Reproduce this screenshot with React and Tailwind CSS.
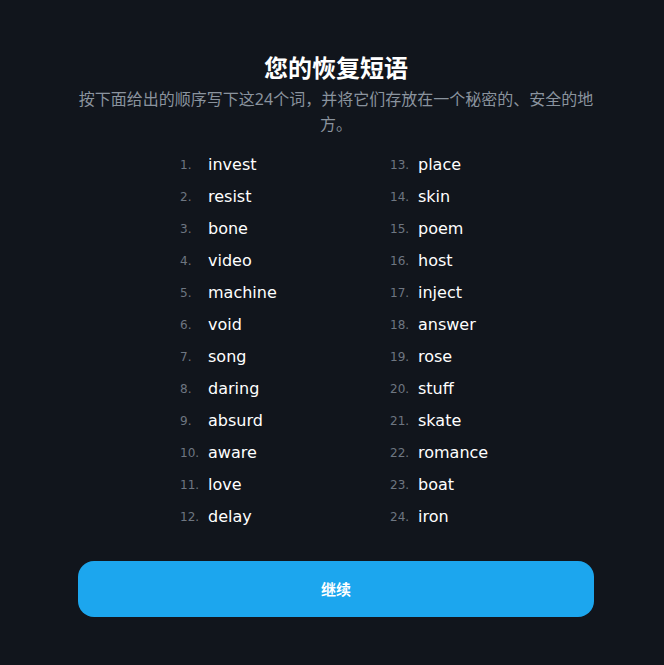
import React from 'react';

const WORDS = [
  'invest', 'resist', 'bone', 'video', 'machine', 'void', 'song', 'daring', 'absurd', 'aware', 'love', 'delay',
  'place', 'skin', 'poem', 'host', 'inject', 'answer', 'rose', 'stuff', 'skate', 'romance', 'boat', 'iron',
];

const cjk = { fontFamily: '"Noto Sans", "Noto Sans CJK SC", sans-serif' };
const latin = { fontFamily: '"DejaVu Sans", "Noto Sans", sans-serif' };

function Column({ start }) {
  return (
    <div className="flex flex-col" style={latin}>
      {WORDS.slice(start, start + 12).map((w, i) => (
        <div key={w} className="flex items-center h-[32px]">
          <span className="w-[28px] text-[12px] text-[#6e7681]">{start + i + 1}.</span>
          <span className="text-[16px] text-white">{w}</span>
        </div>
      ))}
    </div>
  );
}

export default function App() {
  return (
    <div className="min-h-[665px] w-full bg-[#11151c] pl-[78px] pr-[70px] pt-[51px]" style={cjk}>
      <h1 className="text-center text-[24px] font-bold text-white leading-[34px]">您的恢复短语</h1>
      <p className="mt-[2px] text-center text-[16px] leading-[25px] text-[#8a939e]">
        按下面给出的顺序写下这24个词，并将它们存放在一个秘密的、安全的地方。
      </p>
      <div className="mt-[12px] grid grid-cols-[210px_210px] pl-[102px]">
        <Column start={0} />
        <Column start={12} />
      </div>
      <button className="mt-[28px] h-[56px] w-full rounded-[16px] bg-[#1ca6ee] text-[15px] font-bold text-white">
        继续
      </button>
    </div>
  );
}
